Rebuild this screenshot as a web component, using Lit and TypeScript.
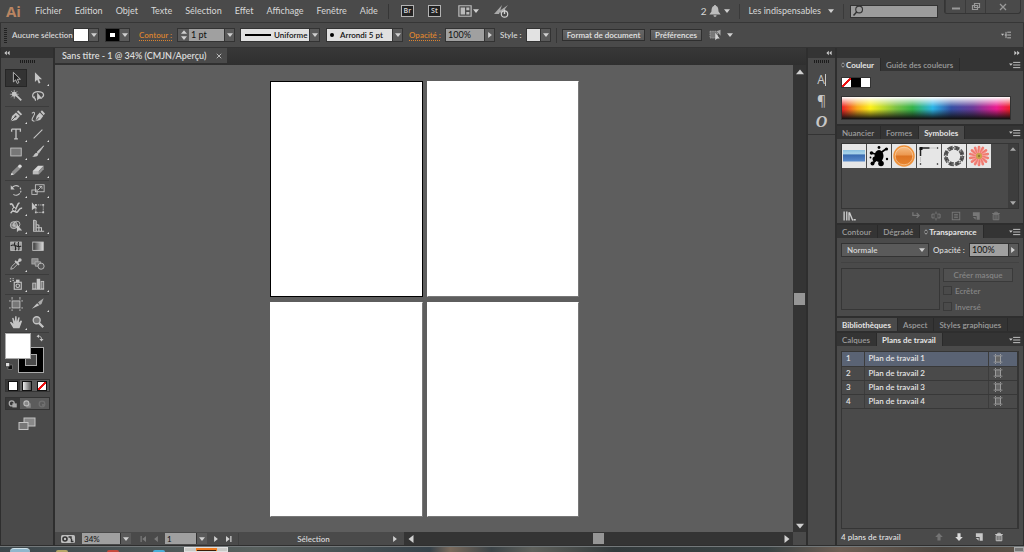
import { LitElement, html, svg, css, nothing } from "lit";
import { customElement, property, state } from "lit/decorators.js";
import { classMap } from "lit/directives/class-map.js";

const L = "#c4c4c4";
const M = "#8f8f8f";

/* 16 x 16 glyphs, keyed by tool or command name */
const glyphs: Record<string, unknown> = {
  select: svg`<path d="M5 1.5v11l2.6-2.4 1.8 4.1 1.9-.9-1.8-3.9h3.6z" fill="#222" stroke="${L}" stroke-width="1"/>`,
  direct: svg`<path d="M4.5 1.5v11l2.6-2.4 1.8 4.1 1.9-.9-1.8-3.9h3.6z" fill="${L}"/>`,
  wand: svg`<path d="M8 7l6 6" stroke="${L}" stroke-width="2"/><circle cx="6" cy="6" r="2.8" fill="${L}"/><path d="M6 1v10M1 6h10M2.5 2.5l7 7M9.500 2.500l-7 7" stroke="${L}" stroke-width=".8"/>`,
  lasso: svg`<path d="M5 11C0 10 1 3 8 3s8 5 4 7M4 8.500c-2 2 2 2 1 5" fill="none" stroke="${L}" stroke-width="1.400"/><path d="M7 4v9l2.200-2H13z" fill="${L}"/>`,
  pen: svg`<path d="M2 14l1.500-6L8 4l4.500 4L8.500 12.500z" fill="${L}"/><path d="M9 3l1.500-1.500 4.500 4.500L13.500 7.500z" fill="${L}"/><path d="M2.500 13.500L7 9" stroke="#444" stroke-width="1"/><circle cx="7.500" cy="8.500" r="1.100" fill="#444"/>`,
  curve: svg`<path d="M5 14l1.500-6L10 4l4 4-3.500 4.500z" fill="${L}"/><path d="M11 3l1.500-1.500L16 5l-1.500 2z" fill="${L}"/><path d="M5.500 13.500L9 9.500" stroke="#444"/><path d="M1 5c3-3 4 0 2 3s-3 6 1 6" fill="none" stroke="${L}" stroke-width="1.200"/>`,
  type: svg`<path d="M3 2.500h10v3M3 2.500v3M8 2.500v11M5.800 13.500h4.400" fill="none" stroke="${L}" stroke-width="1.500"/>`,
  line: svg`<path d="M3 13L13 3" stroke="${L}" stroke-width="1.200"/>`,
  rect: svg`<rect x="2" y="3.500" width="12" height="9" fill="#777" stroke="${L}"/>`,
  brush: svg`<path d="M14.500 1L8.500 9.500 7 8z" fill="${L}" stroke="${L}"/><path d="M7.500 9c2 2 0 5-6.500 4.500 3-.5 2.500-5 6.500-4.500z" fill="${L}"/>`,
  pencil: svg`<path d="M2 14l1.500-4 7-7 3 3-7.500 7z" fill="${M}"/><path d="M2 14l1-3 2.500 2z" fill="#ddd"/><circle cx="12.500" cy="3.800" r="2" fill="#ddd"/>`,
  eraser: svg`<path d="M2 9l6-6h6.500L9 9z" fill="#d5d5d5"/><path d="M2 9h7v4H2z" fill="#bbb"/><path d="M9 9l5.500-6v4L9 13z" fill="${M}"/>`,
  rotate: svg`<path d="M3.500 5.500A5.500 5.500 0 1 1 5 13" fill="none" stroke="${L}" stroke-width="1.300" stroke-dasharray="9 1.500 2 1.500 2 1.500"/><path d="M2 2.500v5h4.500z" fill="${L}"/>`,
  scale: svg`<rect x="5" y="2" width="10" height="8" fill="none" stroke="${L}"/><rect x="1" y="8" width="6" height="5" fill="none" stroke="${L}"/><path d="M8 8l4-4M9.500 4H12.500v3" fill="none" stroke="${L}"/>`,
  warp: svg`<path d="M1 4c4-3 4 5 6 5s2-6 5-7M2 14c3-6 6 1 8-2s2-4 5-4" fill="none" stroke="${L}" stroke-width="1.800"/><circle cx="6" cy="9.500" r="2" fill="#444" stroke="#ddd"/>`,
  free: svg`<path d="M1 1.500v9l2.500-2H7z" fill="${L}"/><rect x="5.500" y="4.500" width="8.500" height="8.500" fill="none" stroke="${L}" stroke-dasharray="1.500 1"/><path d="M4.500 3.500h2v2h-2zM13 3.500h2v2h-2zM4.500 12h2v2h-2zM13 12h2v2h-2z" fill="${L}"/>`,
  builder: svg`<circle cx="5.500" cy="7" r="4" fill="#777" stroke="${L}"/><circle cx="9" cy="6" r="3.500" fill="none" stroke="${L}"/><path d="M3 7h5M5.500 4.500v5" stroke="${L}"/><path d="M9 6v9l2-2h4z" fill="${L}"/>`,
  perspective: svg`<path d="M3 1v13h12M3 1l3 1.500V14M3 5.500l6 1.500v7M3 10h9v4" fill="none" stroke="${L}" stroke-width="1.200"/><path d="M6 3v10H3.500V2z" fill="${M}"/>`,
  mesh: svg`<rect x="2" y="3.500" width="12" height="9.500" fill="#a0a0a0" stroke="${L}"/><path d="M2 8c4-4 7 3 12 0M7 3.500c-3 3 3 6 0 9.500M11 3.500c-2 4 2 5 0 9.500" fill="none" stroke="#222" stroke-width="1.200"/>`,
  gradient: svg`<defs><linearGradient id="gt"><stop stop-color="#333"/><stop offset="1" stop-color="#ddd"/></linearGradient></defs><rect x="2" y="3.500" width="12" height="9.500" fill="url(#gt)" stroke="${L}"/>`,
  dropper: svg`<path d="M2 14l.8-2.800L8 6l2 2-5.200 5.200z" fill="none" stroke="${L}"/><path d="M7 4.500L11.500 9M9.500 6.500L13 3" stroke="${L}" stroke-width="2"/><circle cx="12.500" cy="3.500" r="2" fill="${L}"/>`,
  blend: svg`<rect x="1" y="2" width="7" height="6" fill="#888" stroke="#aaa"/><path d="M4.500 5.500h6.500v5H5z" fill="#777" stroke="#aaa"/><circle cx="11.500" cy="10.500" r="3.500" fill="#555" stroke="${L}"/>`,
  spray: svg`<path d="M1 2h1.500M4 2h1.500M1 5h1.500M4 4h1.500" stroke="${L}" stroke-width="1.400"/><rect x="6" y="6" width="8" height="8" fill="none" stroke="${L}" stroke-width="1.300"/><path d="M8 6V3h4v3z" fill="${L}"/><circle cx="10" cy="10" r="2" fill="none" stroke="${L}" stroke-width="1.300"/>`,
  graph: svg`<path d="M1 14h14" stroke="${L}"/><rect x="2" y="7" width="3.500" height="6.500" fill="#777" stroke="${L}"/><path d="M6.500 2h4v12h-4z" fill="${L}"/><rect x="11.500" y="5" width="3" height="8.500" fill="#777" stroke="${L}"/>`,
  artboard: svg`<rect x="3.500" y="4.500" width="9" height="8" fill="#777" stroke="${L}"/><path d="M3.500 0v3M12.500 0v3M3.500 14v2M12.500 14v2M0 4.500h2M14 4.500h2M0 12.500h2M14 12.500h2" stroke="${L}"/>`,
  slice: svg`<path d="M1 13.500L7 7l2.500 2.500z" fill="${L}"/><path d="M8 6l6.500-4.500L12 8l-2 1z" fill="#aaa"/>`,
  hand: svg`<path d="M5 15L1 8.500l1.300-.8L5 10 3.600 3.500 5 3l1.800 4.500L7 1.500h1.600l.4 6L10.800 2.500l1.400.4L11.200 8.500l2.500-2.500 1.200 1L12 15z" fill="${L}"/>`,
  zoom: svg`<path d="M9 9l5 5" stroke="${L}" stroke-width="2.600"/><circle cx="6.500" cy="6" r="4" fill="#777" stroke="${L}" stroke-width="1.500"/>`,
  bell: svg`<path d="M8 0c1 0 1.400.6 1.400 1.400C12.500 2.300 12.500 6 12.700 8.500L15.500 12.500H.5L3.300 8.500C3.500 6 3.500 2.300 6.600 1.400 6.600.6 7 0 8 0zM6 13.500h4c0 2.800-4 2.800-4 0z" fill="#bdbdbd"/>`,
  rocket: svg`<path d="M1 11L9 2 6 11zM5 9l10-7-6 8z" fill="#a8a8a8"/><circle cx="11.500" cy="11" r="3.200" fill="#4a4a4a" stroke="#d0d0d0" stroke-width="1.200"/><path d="M11.500 6.500v4.500" stroke="#d0d0d0" stroke-width="1.400"/>`,
  workspace: svg`<path d="M1 2h14v12H1z" fill="none" stroke="#bbb" stroke-width="1.400"/><path d="M3 4h5v8H3zM9.500 4H13v3H9.500zM9.500 9H13v3H9.500z" fill="#bbb"/>`,
  search: svg`<circle cx="9.500" cy="6" r="4.500" fill="none" stroke="#333" stroke-width="1.500"/><path d="M6.500 9L2 14" stroke="#333" stroke-width="2"/>`,
  isolate: svg`<path d="M0 3h10v9H0z" fill="#777" stroke="#aaa" stroke-dasharray="2 1"/><path d="M9 3l5-2v8z" fill="#aaa"/><path d="M7 5v10l2.500-2.500H13z" fill="#d5d5d5"/>`,
  menu: svg`<path d="M0 6h5L2.500 9z" fill="${L}"/><path d="M5.500 4.500H15M5.500 8H15M5.500 11.500H15" stroke="${L}" stroke-width="1.300"/>`,
  dockmenu: svg`<path d="M0 6h5L2.500 9z" fill="${L}"/><path d="M6 8h3M10 3.500h6M10 8h6M10 12.500h6M8 3v10" stroke="${L}" stroke-width="1.400"/>`,
  down: svg`<path d="M0 3.500h16l-8 9.500z" fill="#d0d0d0"/>`,
  up: svg`<path d="M0 12.500h16L8 3z" fill="#d0d0d0"/>`,
  right: svg`<path d="M3 0v16l10-8z" fill="#d0d0d0"/>`,
  left: svg`<path d="M13 0v16L3 8z" fill="#d0d0d0"/>`,
  first: svg`<path d="M3 2h2.500v12H3zM14 2v12L6.500 8z" fill="#d0d0d0"/>`,
  last: svg`<path d="M10.500 2H13v12h-2.500zM2 2v12l7.500-6z" fill="#d0d0d0"/>`,
  dleft: svg`<path d="M7.500 2v12L1 8zM15 2v12L8.500 8z" fill="#ccc"/>`,
  dright: svg`<path d="M1 2v12l6.500-6zM8.500 2v12L15 8z" fill="#ccc"/>`,
  close: svg`<path d="M2 2l12 12M14 2L2 14" stroke="#bbb" stroke-width="2.600"/>`,
  updown: svg`<path d="M4 6.500L8 2l4 4.500M4 9.500L8 14l4-4.500" fill="none" stroke="#ccc" stroke-width="1.800"/>`,
  books: svg`<path d="M1.500 2v12M5 2v12M8 3v11M8.500 3L13 14" fill="none" stroke="#ccc" stroke-width="1.800"/><path d="M14 12h3v2h-3z" fill="#ccc"/>`,
  place: svg`<path d="M3 2v5h9M9 3l4 4-4 4" fill="none" stroke="#777" stroke-width="2"/>`,
  unlink: svg`<path d="M6 5H1.500v6H6M10 5h4.500v6H10M8 1v4M8 11v4M4 8h2M10 8h2" fill="none" stroke="#777" stroke-width="1.600"/>`,
  options: svg`<rect x="2" y="2" width="12" height="12" fill="none" stroke="#777" stroke-width="1.500"/><path d="M5 5.500h6M5 8h6M5 10.500h6" stroke="#777" stroke-width="1.400"/>`,
  new: svg`<path d="M3 2h11v12H9V8H3z" fill="currentColor"/><path d="M3 9.500h4.500V14z" fill="currentColor"/>`,
  trash: svg`<path d="M2 4h12M6 4V2h4v2" fill="none" stroke="currentColor" stroke-width="1.600"/><path d="M3.500 5.500h9V14h-9zM6.500 6v8M9.500 6v8" fill="none" stroke="currentColor" stroke-width="1.500"/>`,
  arrowup: svg`<path d="M8 1.500l6 6.500h-3.500v5.500h-5V8H2z" fill="#737373"/>`,
  arrowdown: svg`<path d="M8 14.500L2 8h3.500V2h5v6H14z" fill="#dcdcdc"/>`,
  board: svg`<path d="M4 3h8v10H4z" fill="#666" stroke="#aaa" stroke-width="1.300"/><path d="M4 0v2M12 0v2M4 14v2M12 14v2M1 3h2M13 3h2M1 13h2M13 13h2" stroke="#aaa" stroke-width="1.300"/>`,
  swap: svg`<path d="M4 4.500c5-1 7 2 7 6" fill="none" stroke="${L}" stroke-width="1.800"/><path d="M6 1v7L1 4.500zM7 10h8l-4 5z" fill="${L}"/>`,
  reset: svg`<rect x="6" y="6" width="9" height="9" fill="#111" stroke="#999"/><rect x="1.500" y="1.500" width="8" height="8" fill="#ddd" stroke="#111"/>`,
  screen: svg`<rect x="5" y="2" width="11" height="8" fill="#888" stroke="${L}"/><rect x="0" y="6.500" width="9" height="7" fill="#777" stroke="${L}"/>`,
  draw1: svg`<circle cx="6" cy="7" r="4" fill="none" stroke="#aaa" stroke-width="2"/><rect x="7" y="7" width="7" height="6.500" fill="#aaa"/>`,
  draw2: svg`<rect x="7" y="7" width="7" height="7" fill="#888"/><circle cx="7" cy="7" r="4" fill="#888" stroke="#bbb" stroke-width="1.800"/>`,
  draw3: svg`<circle cx="8" cy="8" r="4.500" fill="none" stroke="#707070" stroke-width="2"/><path d="M8 8h4v3H8z" fill="#707070"/>`,
  gpu: svg`<rect x="1" y="4" width="14" height="8" rx="1.500" fill="#bdbdbd"/><circle cx="5" cy="8" r="2" fill="#bdbdbd" stroke="#333" stroke-width="1.600"/><path d="M8.500 6h2.500v2M13.500 10.500H11.500V8" fill="none" stroke="#333" stroke-width="1.400"/>`,
};

@customElement("ui-icon")
export class UiIcon extends LitElement {
  @property() name = "";
  static styles = css`
    :host { display: block; width: 8px; height: 8px; flex: none; }
    svg { display: block; width: 100%; height: 100%; overflow: visible; }
  `;
  render() {
    return html`<svg viewBox="0 0 16 16" aria-hidden="true">${glyphs[this.name]}</svg>`;
  }
}

type Tool = [string, string, boolean];
const toolGroups: Tool[][] = [
  [["select", "Sélection", false], ["direct", "Sélection directe", true], ["wand", "Baguette magique", false], ["lasso", "Lasso", false]],
  [["pen", "Plume", true], ["curve", "Courbure", false], ["type", "Texte", true], ["line", "Trait", true], ["rect", "Rectangle", true], ["brush", "Pinceau", true], ["pencil", "Crayon", true], ["eraser", "Gomme", true]],
  [["rotate", "Rotation", true], ["scale", "Mise à l'échelle", true], ["warp", "Largeur", true], ["free", "Transformation manuelle", false], ["builder", "Concepteur de forme", true], ["perspective", "Grille de perspective", true]],
  [["mesh", "Filet", false], ["gradient", "Dégradé", false], ["dropper", "Pipette", true], ["blend", "Dégradé de formes", false]],
  [["spray", "Pulvérisation", true], ["graph", "Graphe", true]],
  [["artboard", "Plan de travail", false], ["slice", "Tranche", true], ["hand", "Main", true], ["zoom", "Zoom", false]],
];

const symbols = [
  svg`<defs><linearGradient id="sb" x2="0" y2="1"><stop stop-color="#8cc0e0"/><stop offset=".3" stop-color="#a8d4ea"/><stop offset=".45" stop-color="#3b6cb0"/><stop offset="1" stop-color="#5b8ccc"/></linearGradient></defs><rect x="1" y="6" width="22" height="11.500" fill="url(#sb)"/>`,
  svg`<g fill="#000"><ellipse cx="12" cy="12" rx="4.500" ry="6"/><circle cx="12" cy="3.500" r="1.400"/><circle cx="4.500" cy="9" r="1.800"/><circle cx="5.500" cy="19.500" r="2"/><circle cx="14" cy="19.500" r="2.800"/><circle cx="19.500" cy="5" r="1.600"/><circle cx="20" cy="15" r="1.200"/><circle cx="8" cy="15" r="2.500"/><circle cx="3.500" cy="13.500" r=".9"/></g><path d="M12 10l7-5M12 11L4.500 9M11 14l-5 5M13 12l1 7" stroke="#000" stroke-width="1.800"/>`,
  svg`<defs><linearGradient id="so" x2="0" y2="1"><stop stop-color="#f6c28c"/><stop offset=".45" stop-color="#ec9850"/><stop offset=".5" stop-color="#dc7424"/><stop offset="1" stop-color="#e8862f"/></linearGradient></defs><circle cx="12" cy="12" r="10" fill="url(#so)" stroke="#f0923a" stroke-width="1.500"/><circle cx="12" cy="12" r="8.800" fill="none" stroke="#fbd9b2" stroke-width=".6"/>`,
  svg`<path d="M3.500 4h9M3.500 4v8" stroke="#222" stroke-width="1.500"/><path d="M2.500 3h3v3h-3z" fill="#111"/><path d="M20 3.500l1 1M20 20.500l1-1M4 20.500l-1-1" stroke="#333" stroke-width="1.500"/><path d="M13 4h6M3.500 13v5" stroke="#bbb" stroke-width=".8"/>`,
  svg`<circle cx="12" cy="12" r="8.300" fill="none" stroke="#555" stroke-width="4" stroke-dasharray="5 1.520"/><circle cx="12" cy="12" r="8.300" fill="none" stroke="#bbb" stroke-width="1.500" stroke-dasharray="2.500 4.020" stroke-dashoffset="1"/><circle cx="12" cy="12" r="8.300" fill="none" stroke="#333" stroke-width="1" stroke-dasharray="1.200 1.500"/>`,
  svg`<g stroke="#f07a70" stroke-width="2.600" stroke-linecap="round">${Array.from({ length: 14 }, (_, i) => svg`<path d="M12 9V3" transform="rotate(${(i * 360) / 14} 12 12)"/>`)}</g><g stroke="#f8aaa2" stroke-width=".7">${Array.from({ length: 14 }, (_, i) => svg`<path d="M12 9V3" transform="rotate(${(i * 360) / 14 + 8} 12 12)"/>`)}</g><circle cx="12" cy="12" r="3" fill="#c9a64a"/><circle cx="12" cy="12" r="1.200" fill="#8e7a35"/>`,
];

@customElement("app-root")
export class AppRoot extends LitElement {
  @state() private tool = "select";
  @state() private board = 1;

  static styles = css`
    :host {
      display: grid;
      grid-template-rows: 23px 25px minmax(0, 1fr) 6px;
      height: 100vh;
      overflow: hidden;
      background: #2e2e2e;
      color: #d6d6d6;
      font: 600 8px/12px "Lato", "Open Sans", sans-serif;
    }
    * { box-sizing: border-box; }
    button, input, select { font: inherit; color: inherit; margin: 0; padding: 0; border: 0; background: none; border-radius: 0; outline: 0; }
    button { display: flex; align-items: center; justify-content: center; }
    a { color: inherit; text-decoration: none; }
    .i10 { width: 10px; height: 10px; }
    .i12 { width: 12px; height: 12px; }
    .i14 { width: 14px; height: 14px; }
    .i16 { width: 16px; height: 16px; }
    .i6 { width: 6px; height: 6px; }
    .spacer { flex: 1; }

    .menubar { display: flex; align-items: center; background: #4a4a4a; border-bottom: 1px solid #363636; font-size: 9px; font-weight: 400; color: #d8d8d8; padding-left: 6px; }
    .logo { width: 29px; font: 700 15px/20px "Open Sans", sans-serif; color: #b98562; }
    .menus { display: flex; gap: 13px; }
    .vline { width: 1px; height: 15px; background: #363636; }
    .apps { display: flex; align-items: center; gap: 14px; margin: 0 12px 0 10px; padding-left: 12px; border-left: 1px solid #363636; height: 15px; }
    .app { width: 13px; height: 12px; background: #222; border: 1px solid #b4b4b4; font: 600 7px/8px "Open Sans", sans-serif; }
    .drop { gap: 1px; margin-left: 3px; }
    .note { gap: 3px; margin-right: 9px; font-size: 10px; }
    .space { gap: 7px; padding: 0 9px 0 8px; border: solid #3a3a3a; border-width: 0 1px; height: 15px; }
    .find { display: flex; align-items: center; width: 88px; height: 13px; margin: 0 6px; padding-left: 1px; background: #9c9c9c; border: 1px solid #333; }
    .find input { width: 70px; color: #222; }
    .winbtns { display: flex; align-self: flex-start; height: 14px; margin-right: 3px; border: 1px solid #353535; border-top: 0; border-radius: 0 0 3px 3px; color: #888; }
    .winbtns button { width: 20px; border-left: 1px solid #3a3a3a; }
    .winbtns button:last-child { width: 35px; }

    .options { display: flex; align-items: center; background: #4a4a4a; border: solid #333; border-width: 0 1px 1px; padding: 0 12px 0 3px; gap: 5px; }
    .grip { width: 3px; height: 15px; background: repeating-linear-gradient(#222 0 1px, #4a4a4a 1px 2px); }
    .status { width: 56px; white-space: nowrap; }
    .combo { display: flex; height: 14px; border: 1px solid #333; color: #111; }
    .combo > button { width: 10px; background: #5a5a5a; border-left: 1px solid #333; }
    .combo input, .combo .val { background: #a0a0a0; }
    .combo input { padding-left: 2px; font-weight: 400; font-size: 9px; }
    .combo .val { display: flex; align-items: center; }
    .combo .val.light { background: #e0e0e0; }
    .chip { width: 14px; background: #fff; }
    .chip.stroke { width: 13px; background: #fff; border: 4px solid #000; }
    .chip.pale { background: #e2e2e2; width: 13px; }
    .step { width: 11px; flex-direction: column; display: flex; background: #5a5a5a; }
    .step button { width: 11px; height: 6px; }
    .orange { color: #dc8430; border-bottom: 1px dotted #dc8430; line-height: 10px; white-space: nowrap; }
    .contour { width: 33px; margin-left: 4px; }
    .opac { width: 31px; margin-left: 1px; }
    .style { width: 21px; white-space: nowrap; }
    .g1 { margin-right: 1px; }
    .w35 { width: 35px; }
    .w40 { width: 38px; }
    .w68 { width: 68px; padding-left: 4px; gap: 3px; }
    .w65 { width: 65px; padding-left: 3px; gap: 6px; }
    .rule { width: 26px; height: 2px; background: #000; }
    .dot { width: 4px; height: 4px; border-radius: 50%; background: #000; }
    .push { height: 12px; border: 1px solid #2f2f2f; background: linear-gradient(#666, #585858); white-space: nowrap; color: #e4e4e4; }
    .push.wide { width: 83px; }
    .push.mid { width: 52px; margin-right: 3px; }

    .main { display: grid; grid-template-columns: 54px minmax(0, 1fr) 28px 188px; column-gap: 1px; min-height: 0; padding-bottom: 1px; }
    .strip { display: flex; align-items: center; height: 10px; padding: 0 3px; background: #343434; }
    .dots { width: 15px; height: 3px; margin: 2px auto 6px; background: repeating-linear-gradient(90deg, #1c1c1c 0 1px, #4a4a4a 1px 2px); }

    .tools { background: #4a4a4a; border: solid #2e2e2e; border-width: 0 1px; }
    .tools .group { display: grid; grid-template-columns: 22px 22px; grid-auto-rows: 18px; margin: 0 4px; padding-bottom: 1px; border-bottom: 1px solid #3c3c3c; }
    .tools .group button { position: relative; }
    .tools .group button.on { background: #333; border: 1px solid #262626; }
    .tools .group button.more::after { content: ""; position: absolute; right: 0; bottom: 1px; border: 1px solid #ddd; border-top-color: transparent; border-left-color: transparent; }
    .paint { display: grid; grid-template-columns: 26px 13px; grid-template-rows: 26px 14px; margin: 0 0 6px 4px; }
    .paint .stroke { grid-area: 1 / 1 / 3 / 3; justify-self: end; align-self: end; width: 26px; height: 26px; border: 7px solid #000; outline: 1px solid #aaa; outline-offset: -1px; background: #4a4a4a; box-shadow: inset 0 0 0 1px #aaa; }
    .paint .fill { grid-area: 1 / 1; background: #fff; border: 1px solid #aaa; z-index: 1; }
    .paint .swap { grid-area: 1 / 2; align-self: start; margin: 1px 0 0 5px; }
    .paint .reset { grid-area: 2 / 1; align-self: center; justify-self: start; }
    .modes { display: grid; grid-template-columns: repeat(3, 1fr); height: 13px; margin: 0 3px 5px 4px; background: #5c5c5c; border: 1px solid #333; }
    .modes button.on { background: #383838; }
    .modes i { width: 10px; height: 10px; border: 1px solid #111; background: #fff; }
    .modes .grad { background: linear-gradient(90deg, #eee, #555); }
    .swatches .none { background: linear-gradient(135deg, #fff 42%, #e11 42% 58%, #fff 58%); }
    .modes .none { background: linear-gradient(135deg, #fff 38%, #e11 38% 62%, #fff 62%); }
    .screen { margin: 6px auto 0; }

    .doc { display: grid; grid-template: 17px minmax(0, 1fr) 13px / minmax(0, 1fr) 13px; background: #333; }
    .tabs { grid-column: 1 / 3; display: flex; background: linear-gradient(#383838, #2f2f2f); }
    .tabs .tab { display: flex; align-items: center; gap: 9px; padding: 0 5px 0 7px; background: #4a4a4a; font-size: 9px; color: #dcdcdc; height: 15px; }
    .canvas { display: grid; grid-template-columns: 153px 152px; grid-template-rows: 216px 215px; gap: 5px 4px; place-content: center; padding-left: 1px; background: #5e5e5e; }
    .sheet { background: #fff; border: 1px solid #777; border-left-color: #fff; border-top-color: #fff; }
    .sheet.on { border: 1px solid #000; }
    .vscroll { display: grid; grid-template-rows: 13px 1fr 13px; justify-items: center; align-items: center; background: #343434; }
    .vscroll .track { align-self: stretch; display: grid; grid-template-rows: 1fr 12px 1fr; }
    .vscroll .track i, .hscroll .track i { background: #969696; }
    .vscroll .track i { width: 11px; grid-row: 2; }
    .vscroll ui-icon, .hscroll ui-icon { width: 8px; height: 8px; justify-self: center; }
    .foot { display: flex; align-items: center; background: #4a4a4a; padding-left: 5px; }
    .foot .combo { height: 11px; border: 0; }
    .foot .combo button { width: 11px; }
    .foot input { font-size: 8px; }
    .foot .zoomfield { margin: 0 8px 0 6px; }
    .foot .zoomfield input { width: 38px; }
    .foot .pages { margin: 0 6px 0 6px; }
    .foot .pages input { width: 31px; }
    .foot .dim { opacity: .35; }
    .foot .nav { gap: 6px; }
    .foot .nav, .foot .state { display: flex; align-items: center; }
    .foot .state { justify-content: center; width: 150px; margin-left: 5px; border-left: 1px solid #404040; }
    .foot .hs { margin: 0 6px 0 4px; }
    .hscroll { flex: 1; height: 13px; display: grid; grid-template-columns: 13px 1fr 13px; align-items: center; background: #343434; }
    .hscroll .track { display: grid; height: 11px; grid-template-columns: 1fr 11px 1fr; }
    .hscroll .track i { grid-column: 2; }
    .corner { background: #4a4a4a; }

    .icons { background: #4a4a4a; margin-left: 1px; }
    .icons .strip { justify-content: flex-end; }
    .icons .set { display: grid; justify-items: center; padding-bottom: 2px; border-bottom: 1px solid #333; }
    .icons .set button { width: 22px; height: 21px; font: 400 14px/20px "Open Sans", sans-serif; color: #c8c8c8; }
    .icons .set .caret { border-right: 1px solid #c8c8c8; height: 12px; line-height: 12px; font-size: 12px; }
    .icons .set .open { font: italic 700 16px/20px "Liberation Serif", serif; }

    .dock { display: flex; flex-direction: column; margin: 0 1px; min-width: 0; }
    .dock .strip { justify-content: flex-end; }
    .panel { display: flex; flex-direction: column; background: #4a4a4a; margin-bottom: 2px; }
    .panel.grow { flex: 1; margin-bottom: 0; }
    .ptabs { display: flex; align-items: center; height: 13px; flex: none; background: #343434; color: #9c9c9c; padding-right: 2px; }
    .ptabs button { height: 13px; padding: 0 6px 0 5px; border-right: 1px solid #2a2a2a; white-space: nowrap; }
    .ptabs button.on { background: #4a4a4a; color: #e4e4e4; font-weight: 700; }
    .ptabs button.mark { padding-left: 3px; }
    .ptabs ui-icon { margin-left: auto; }
    .ptabs button ui-icon { margin: 0; }
    .color { height: 53px; padding: 6px 4px; }
    .swatches { display: flex; width: 30px; height: 11px; border: 1px solid #333; margin-bottom: 8px; }
    .swatches i { flex: 1; background: #fff; }
    .swatches .k { background: #000; }
    .spectrum { height: 24px; margin-right: 8px; border: 1px solid #333; background: linear-gradient(#fff 0, #fff0 45%, #0000 55%, #111 100%), linear-gradient(90deg, #ed2024 0, #f7a81b 9%, #fdf01a 17%, #7cc242 32%, #35b34a 42%, #2bb5e8 54%, #3450a4 65%, #6a3a98 78%, #ec1c90 92%, #ed2024 100%); }
    .symbols { padding: 4px 4px 1px; }
    .well { display: grid; grid-template-columns: 1fr 10px; height: 66px; border: 1px solid #353535; }
    .tiles { display: flex; }
    .tiles svg { width: 24px; height: 24px; background: #e6e6e6; margin-right: 1px; }
    .rail { display: flex; flex-direction: column; justify-content: space-between; align-items: center; padding: 2px 0; background: #383838; opacity: .7; }
    .tray { display: flex; align-items: center; justify-content: flex-end; gap: 10px; height: 13px; padding: 0 18px 0 2px; color: #777; }
    .tray .first { margin-right: auto; color: #ccc; }
    .transp { padding: 5px 4px 2px; }
    .line { display: flex; align-items: center; gap: 4px; padding-bottom: 5px; border-bottom: 1px solid #424242; }
    .opl { white-space: nowrap; }
    .pick { display: grid; width: 88px; height: 14px; border: 1px solid #333; background: #5a5a5a; }
    .pick select { grid-area: 1 / 1; appearance: none; padding-left: 5px; line-height: 12px; }
    .pick ui-icon { grid-area: 1 / 1; justify-self: end; align-self: center; width: 6px; height: 6px; margin-right: 3px; pointer-events: none; }
    .masks { display: grid; grid-template-columns: 99px 1fr; gap: 3px; padding: 5px 4px 0 0; color: #858585; }
    .thumb { height: 42px; border: 1px solid #363636; }
    .masks .side { display: grid; grid-template-rows: 14px 15px 15px; row-gap: 1px; align-items: center; }
    .masks button { width: 70px; height: 14px; border: 1px solid #3a3a3a; background: #505050; color: #858585; }
    .check { display: flex; align-items: center; gap: 3px; }
    .check input { appearance: none; width: 9px; height: 9px; border: 1px solid #3a3a3a; }
    .list { flex: 1; margin: 5px 4px 0; border: 1px solid #353535; border-right-width: 2px; }
    table { width: 100%; border-collapse: collapse; table-layout: fixed; }
    td { height: 14px; padding: 0 4px; border-bottom: 1px solid #383838; border-right: 1px solid #3c3c3c; line-height: 13px; color: #e4e4e4; cursor: default; }
    td:last-child { border-right: 0; }
    .c1 { width: 22px; }
    .c3 { width: 29px; }
    tr.on { background: #5a6374; }
    .list ui-icon { width: 10px; height: 10px; }
    .tray.boards { height: 16px; color: #c8c8c8; padding: 0 19px 0 4px; }
    .tray.boards .first { color: #dcdcdc; }

    .taskbar { display: flex; align-items: flex-end; border-top: 1px solid #73787a; background: linear-gradient(90deg, #3c464b 0, #58605e 25%, #37424a 42%, #7a6a5c 44%, #3c4448 48%, #5f615c 52%, #333a3c 60%, #3a4344 75%, #6e5f55 82%, #4c4640 92%, #5c5248 100%); padding-left: 10px; overflow: hidden; }
    .orb { width: 20px; height: 4px; border-radius: 10px 10px 0 0; background: #8fb6cc; border-top: 1px solid #cfe2ea; }
    .pin { width: 12px; height: 2px; border-radius: 5px 5px 0 0; }
    .folder { background: #b5a568; margin-left: 26px; }
    .red { background: #c5483c; margin-left: 39px; }
    .blue { background: #4aaed8; margin-left: 34px; }
    .task { width: 44px; height: 5px; margin-left: 19px; background: #c9c9c6; border: 1px solid #e0e0e0; display: flex; justify-content: center; align-items: flex-end; }
    .task i { width: 21px; height: 3px; background: #3a1c08; border: solid #f07c20; border-width: 2px 1px 0; }
    .show { width: 10px; height: 5px; margin-left: auto; border: 1px solid #aaa; background: #777; }
  `;

  private icon(name: string, cls = "") {
    return html`<ui-icon name=${name} class=${cls}></ui-icon>`;
  }

  private panelTabs(tabs: string[], active: string, marked = false, menu = true) {
    return html`<div class="ptabs" role="tablist">
      ${tabs.map((t) => html`<button role="tab" class=${classMap({ on: t === active, mark: marked && t === active })}>${marked && t === active ? this.icon("updown", "i6") : nothing}${t}</button>`)}
      ${menu ? this.icon("menu", "i12") : nothing}
    </div>`;
  }

  private menubar() {
    const menus = ["Fichier", "Edition", "Objet", "Texte", "Sélection", "Effet", "Affichage", "Fenêtre", "Aide"];
    return html`<header class="menubar">
      <span class="logo">Ai</span>
      <nav class="menus">${menus.map((m) => html`<a href="#">${m}</a>`)}</nav>
      <div class="apps">
        <button class="app">Br</button><button class="app">St</button>
        <button class="drop" aria-label="Réorganiser">${this.icon("workspace", "i14")}${this.icon("down", "i6")}</button>
        <button aria-label="Performances">${this.icon("rocket", "i16")}</button>
      </div>
      <span class="spacer"></span>
      <button class="note">2 ${this.icon("bell", "i12")}${this.icon("down", "i6")}</button>
      <button class="space">Les indispensables ${this.icon("down", "i6")}</button>
      <label class="find">${this.icon("search", "i12")}<input type="search" aria-label="Rechercher" /></label>
      <div class="winbtns">
        <button aria-label="Réduire"><svg width="8" height="8"><path d="M0 5.500h8" stroke="#999" stroke-width="2"/></svg></button>
        <button aria-label="Niveau inférieur"><svg width="10" height="9"><path d="M3.500 1.500h5v4h-5zM1.500 3.500h5v4h-5z" fill="#4a4a4a" stroke="#999" stroke-width="1.200"/></svg></button>
        <button aria-label="Fermer"><svg width="8" height="8"><path d="M1 1l6 6M7 1L1 7" stroke="#999" stroke-width="1.300"/></svg></button>
      </div>
    </header>`;
  }

  private optionBar() {
    const arrow = (name = "down") => html`<button aria-label="Ouvrir">${this.icon(name, "i6")}</button>`;
    return html`<section class="options">
      <span class="grip"></span>
      <span class="status">Aucune sélection</span>
      <div class="combo g1"><span class="chip"></span>${arrow()}</div>
      <div class="combo"><span class="chip stroke"></span>${arrow()}</div>
      <label class="orange contour" for="sw">Contour :</label>
      <div class="combo"><span class="step"><button aria-label="Plus">${this.icon("up", "i6")}</button><button aria-label="Moins">${this.icon("down", "i6")}</button></span>
        <input id="sw" class="w35" .value=${"1 pt"} />${arrow()}</div>
      <div class="combo g1"><span class="val light w68"><i class="rule"></i>Uniforme</span>${arrow()}</div>
      <div class="combo"><span class="val light w65"><i class="dot"></i>Arrondi 5 pt</span>${arrow()}</div>
      <label class="orange opac" for="op">Opacité :</label>
      <div class="combo"><input id="op" class="w40" .value=${"100%"} />${arrow("right")}</div>
      <span class="style">Style :</span>
      <div class="combo"><span class="chip pale"></span>${arrow()}</div>
      <span class="vline"></span>
      <button class="push wide">Format de document</button>
      <button class="push mid">Préférences</button>
      ${this.icon("isolate", "i12")}${this.icon("down", "i6")}
      <span class="spacer"></span>
      ${this.icon("dockmenu", "i10")}
    </section>`;
  }

  private toolbox() {
    return html`<aside class="tools">
      <div class="strip">${this.icon("dleft", "i6")}</div>
      <div class="dots"></div>
      ${toolGroups.map((g) => html`<div class="group">${g.map(([name, label, more]) => html`<button
        class=${classMap({ on: this.tool === name, more })} aria-label=${label} @click=${() => (this.tool = name)}>${this.icon(name, "i14")}</button>`)}</div>`)}
      <div class="paint">
        <button class="fill" aria-label="Fond"></button>
        <button class="swap" aria-label="Permuter">${this.icon("swap")}</button>
        <button class="stroke" aria-label="Contour"></button>
        <button class="reset" aria-label="Par défaut">${this.icon("reset")}</button>
      </div>
      <div class="modes">
        <button class="on" aria-label="Couleur"><i></i></button><button aria-label="Dégradé"><i class="grad"></i></button><button aria-label="Sans"><i class="none"></i></button>
      </div>
      <div class="modes">
        <button class="on" aria-label="Dessin normal">${this.icon("draw1", "i10")}</button><button aria-label="Dessin arrière">${this.icon("draw2", "i10")}</button><button aria-label="Dessin intérieur">${this.icon("draw3", "i10")}</button>
      </div>
      <button class="screen" aria-label="Mode d'écran">${this.icon("screen", "i16")}</button>
    </aside>`;
  }

  private documentView() {
    return html`<main class="doc">
      <div class="tabs"><div class="tab">Sans titre - 1 @ 34% (CMJN/Aperçu)<button aria-label="Fermer">${this.icon("close", "i6")}</button></div></div>
      <div class="canvas">${[1, 2, 3, 4].map((n) => html`<div class=${classMap({ sheet: true, on: n === this.board })}></div>`)}</div>
      <div class="vscroll">${this.icon("up")}<div class="track"><i></i></div>${this.icon("down")}</div>
      <div class="foot">
        ${this.icon("gpu", "i16")}
        <div class="combo zoomfield"><input aria-label="Zoom" .value=${"34%"} /><button aria-label="Ouvrir">${this.icon("down", "i6")}</button></div>
        <div class="nav dim">${this.icon("first")}${this.icon("left", "i6")}</div>
        <div class="combo pages"><input aria-label="Plan de travail" .value=${"1"} /><button aria-label="Ouvrir">${this.icon("down", "i6")}</button></div>
        <div class="nav">${this.icon("right", "i6")}${this.icon("last")}</div>
        <span class="state">Sélection</span>
        ${this.icon("right", "i6 hs")}
        <div class="hscroll">${this.icon("left")}<div class="track"><i></i></div>${this.icon("right")}</div>
      </div>
      <div class="corner"></div>
    </main>`;
  }

  private dock() {
    return html`<aside class="dock">
      <div class="strip">${this.icon("dright", "i6")}</div>
      <section class="panel">
        ${this.panelTabs(["Couleur", "Guide des couleurs"], "Couleur", true)}
        <div class="color"><div class="swatches"><i class="none"></i><i class="k"></i><i></i></div><div class="spectrum"></div></div>
      </section>
      <section class="panel">
        ${this.panelTabs(["Nuancier", "Formes", "Symboles"], "Symboles")}
        <div class="symbols">
          <div class="well"><div class="tiles">${symbols.map((s) => html`<svg viewBox="0 0 24 24">${s}</svg>`)}</div>
            <div class="rail">${this.icon("up", "i6")}${this.icon("down", "i6")}</div></div>
          <div class="tray">${this.icon("books", "i12 first")}${["place", "unlink", "options", "new", "trash"].map((n) => this.icon(n, "i10"))}</div>
        </div>
      </section>
      <section class="panel">
        ${this.panelTabs(["Contour", "Dégradé", "Transparence"], "Transparence", true)}
        <div class="transp">
          <div class="line">
            <div class="pick"><select aria-label="Mode de fusion"><option>Normale</option></select>${this.icon("down")}</div>
            <label class="opl" for="po">Opacité :</label>
            <div class="combo"><input id="po" class="w40" .value=${"100%"} /><button aria-label="Ouvrir">${this.icon("right", "i6")}</button></div>
          </div>
          <div class="masks"><div class="thumb"></div><div class="side">
            <button disabled>Créer masque</button>
            <label class="check"><input type="checkbox" disabled />Ecrêter</label>
            <label class="check"><input type="checkbox" disabled />Inversé</label>
          </div></div>
        </div>
      </section>
      <section class="panel">${this.panelTabs(["Bibliothèques", "Aspect", "Styles graphiques"], "Bibliothèques", false, false)}</section>
      <section class="panel grow">
        ${this.panelTabs(["Calques", "Plans de travail"], "Plans de travail")}
        <div class="list"><table>
          <colgroup><col class="c1" /><col /><col class="c3" /></colgroup>
          <tbody>${[1, 2, 3, 4].map((n) => html`<tr class=${classMap({ on: n === this.board })} @click=${() => (this.board = n)}><td>${n}</td><td>Plan de travail ${n}</td><td>${this.icon("board")}</td></tr>`)}</tbody>
        </table></div>
        <div class="tray boards"><span class="first">4 plans de travail</span>${["arrowup", "arrowdown", "new", "trash"].map((n) => this.icon(n, "i10"))}</div>
      </section>
    </aside>`;
  }

  render() {
    return html`
      ${this.menubar()}
      ${this.optionBar()}
      <div class="main">
        ${this.toolbox()}
        ${this.documentView()}
        <aside class="icons">
          <div class="strip">${this.icon("dleft", "i6")}</div>
          <div class="dots"></div>
          <div class="set"><button aria-label="Caractère"><span class="caret">A</span></button><button aria-label="Paragraphe">¶</button><button class="open" aria-label="OpenType">O</button></div>
        </aside>
        ${this.dock()}
      </div>
      <footer class="taskbar"><i class="orb"></i><i class="pin folder"></i><i class="pin red"></i><i class="pin blue"></i><span class="task"><i></i></span><i class="show"></i></footer>
    `;
  }
}
